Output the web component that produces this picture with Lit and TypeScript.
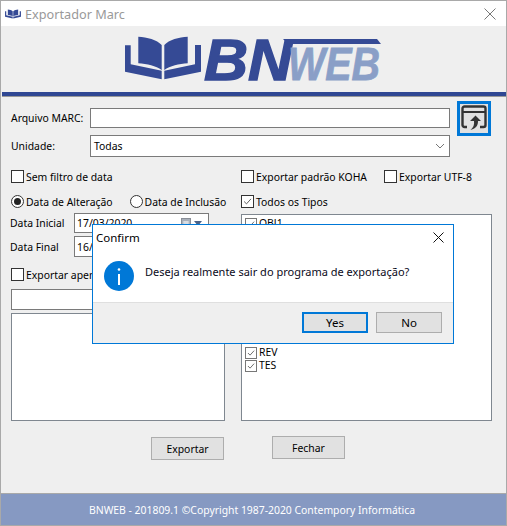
import { LitElement, html, css, svg } from "lit";
import { customElement } from "lit/decorators.js";

const check = html`<svg class="tick" viewBox="0 0 13 13"><path d="M2.5 6.5 5.3 9.3 10.6 3.4" /></svg>`;

function cb(label: string, checked = false) {
  return html`<label class="opt"><span class="box">${checked ? check : ""}</span><span>${label}</span></label>`;
}
function radio(label: string, on = false) {
  return html`<label class="opt"><span class="radio">${on ? html`<i></i>` : ""}</span><span>${label}</span></label>`;
}
function li(label: string) {
  return html`<div class="li"><span class="lbox">${check}</span><span>${label}</span></div>`;
}

const bookPaths = svg`
  <path d="M18.3 6.7C27 7.3 37 9.5 41.7 15V40C36 36 27 33.8 18.3 33.3Z"/>
  <path d="M44.3 15C49 9.5 59 7.3 67.7 6.7V33.3C59 33.8 50 36 44.3 40Z"/>
  <path d="M5 15.3H10.7V34.3L41.7 40.7V49.3L5 41.7Z"/>
  <path d="M81 15H75V34.3L44.3 40.7V49.3L81 41.7Z"/>`;

@customElement("app-root")
export class AppRoot extends LitElement {
  static styles = css`
    :host {
      display: block;
      position: relative;
      width: 507px;
      height: 526px;
      font: 10.4px "Noto Sans", sans-serif;
      color: #000;
    }
    * { box-sizing: border-box; }
    .win {
      width: 507px;
      height: 526px;
      border: 1px solid #a9a9a9;
      background: #efefef;
      display: flex;
      flex-direction: column;
    }
    .title {
      height: 25px;
      background: #fff;
      display: flex;
      align-items: center;
      padding-left: 3px;
      font-size: 12.7px;
      color: #999;
      gap: 3px;
    }
    .title .x { margin-left: auto; margin-right: 10px; display: block; }
    .x path { stroke: #777; stroke-width: 1; fill: none; }
    .logo { height: 66px; padding: 4px 0 0 119px; flex: none; }
    .logo svg { display: block; overflow: visible; }
    .book { fill: #354a95; }
    .bn { font: italic bold 57px "Liberation Sans", sans-serif; fill: #354a95; stroke: #354a95; stroke-width: 1.4; }
    .web { font: italic bold 46px "Liberation Sans", sans-serif; fill: #8a9fc7; stroke: #8a9fc7; stroke-width: 0.8; }
    .rule { height: 5px; flex: none; background: #2f4793; border-bottom: 1px solid #999; margin-left: 1px; }
    .form { flex: 1; padding: 4px 0 0 10px; display: flex; flex-direction: column; }
    .top {
      display: grid;
      grid-template-columns: 79px 360px 41px;
      grid-template-rows: 34px 22px;
      align-items: center;
    }
    .field {
      display: flex;
      align-items: center;
      background: #fff;
      border: 1px solid #7a7a7a;
      padding: 0 3px;
    }
    .in { height: 20px; }
    .sel { height: 22px; justify-content: space-between; padding-right: 4px; }
    .chev { display: block; }
    .chev path { fill: none; stroke: #777; }
    .browse {
      margin-left: 7px;
      width: 34px;
      height: 35px;
      border: 3px solid #0078d7;
      background: #e1e1e1;
      display: flex;
      align-items: center;
      justify-content: center;
      padding: 0;
    }
    .browse svg { display: block; }
    .cols { display: flex; gap: 16px; margin-top: 13px; }
    .left { width: 214px; display: flex; flex-direction: column; }
    .right { width: 251px; display: flex; flex-direction: column; }
    .line { display: flex; height: 13px; align-items: center; }
    .gap17 { gap: 17px; }
    .opt { display: flex; align-items: center; gap: 2px; height: 13px; white-space: nowrap; }
    .box { width: 13px; height: 13px; border: 1px solid #333; background: #fff; flex: none; display: block; }
    .tick { display: block; width: 100%; height: 100%; }
    .tick path { fill: none; stroke: #555; stroke-width: 1.1; }
    .radio {
      width: 13px; height: 13px; border: 1px solid #333; border-radius: 50%; background: #fff;
      flex: none; display: flex; align-items: center; justify-content: center;
    }
    .radio i { width: 7px; height: 7px; border-radius: 50%; background: #222; display: block; }
    .mt12 { margin-top: 12px; }
    .dates { display: grid; grid-template-columns: 63px 135px; margin-top: 5px; row-gap: 3px; align-items: center; }
    .date { height: 20px; justify-content: space-between; padding: 0 6px 0 2px; }
    .date + .lab + .date { height: 21px; }
    .cal { display: flex; align-items: center; gap: 3px; }
    .cal svg { display: block; }
    .lab { margin-left: -1px; }
    .mt11 { margin-top: 11px; }
    .search { height: 21px; margin-top: 8px; }
    .list { background: #fff; border: 1px solid #7f8790; }
    .list.l { height: 108px; margin-top: 3px; }
    .list.r { height: 207px; margin-top: 6px; padding: 2px 0 0 3px; }
    .li { height: 13px; display: flex; align-items: center; gap: 2px; line-height: 13px; }
    .lbox { width: 12px; height: 12px; border: 1px solid #777; background: #fff; flex: none; display: block; }
    .skip { height: 116px; }
    .acts { display: flex; align-items: flex-start; gap: 48px; padding-left: 140px; margin-top: 15px; }
    .btn {
      width: 73px; height: 23px; background: #e1e1e1; border: 1px solid #adadad;
      display: flex; align-items: center; justify-content: center;
    }
    .btn.down { margin-top: 1px; }
    .foot {
      height: 32px;
      flex: none;
      background: #8699c2;
      border-top: 1px solid #a9a9a9;
      color: #fff;
      display: flex;
      align-items: center;
      justify-content: center;
      padding-right: 3px;
    }
    .dlg {
      position: absolute;
      left: 92px;
      top: 224px;
      width: 362px;
      height: 120px;
      background: #fff;
      border: 1px solid #0078d7;
      display: flex;
      flex-direction: column;
      font-size: 11px;
    }
    .dhead { height: 24px; display: flex; align-items: center; justify-content: space-between; padding: 0 9px 0 3px; font-size: 11.5px; flex: none; }
    .dhead .x path { stroke: #111; }
    .dbody { flex: 1; display: flex; align-items: flex-start; padding: 12px 0 0 11px; gap: 11px; }
    .dbody svg { display: block; flex: none; }
    .dbody span { margin-top: 3px; color: #0a0a1a; }
    .dfoot {
      height: 41px; flex: none; background: #efefef; border-top: 1px solid #dfdfdf;
      display: flex; justify-content: flex-end; gap: 8px; padding: 9px 11px 0 0; font-size: 11.5px;
    }
    .dbtn {
      width: 66px; height: 21px; background: #e1e1e1; border: 1px solid #adadad;
      display: flex; align-items: center; justify-content: center;
    }
    .dbtn.def { border: 2px solid #0078d7; }
  `;

  render() {
    return html`
      <div class="win">
        <div class="title">
          <svg width="18" height="14" viewBox="0 0 86 56" class="book">${bookPaths}</svg>
          <span>Exportador Marc</span>
          <svg class="x" width="12" height="12" viewBox="0 0 12 12"><path d="M.5.5 11.5 11.5M11.5.5.5 11.5"/></svg>
        </div>
        <div class="logo">
          <svg width="270" height="60" viewBox="0 0 270 60">
            <g class="book">${bookPaths}</g>
            <text class="bn" x="84" y="50" textLength="88" lengthAdjust="spacingAndGlyphs">BN</text>
            <path class="book" d="M163 9H257L261 14H168Z"/>
            <text class="web" x="168" y="49.5" textLength="92" lengthAdjust="spacingAndGlyphs">WEB</text>
          </svg>
        </div>
        <div class="rule"></div>
        <div class="form">
          <div class="top">
            <span>Arquivo MARC:</span>
            <div class="field in"></div>
            <button class="browse">
              <svg width="26" height="26" viewBox="0 0 26 26">
                <path d="M6 22H3.5A2 2 0 0 1 1.5 20V3.5A2 2 0 0 1 3.5 1.5H22.5A2 2 0 0 1 24.5 3.5V20A2 2 0 0 1 22.5 22H19" fill="none" stroke="#333" stroke-width="2.4"/>
                <path d="M1.5 7H24.5" stroke="#333" stroke-width="2"/>
                <path d="M4 4H5.5M7 4H8.5M10 4H11.5" stroke="#ddd" stroke-width="1"/>
                <path d="M14.5 10.5 20 16H17C17 20 15.5 23.5 9.5 25C12.5 22.5 13.5 19.5 13 16H9Z" fill="#333"/>
              </svg>
            </button>
            <span>Unidade:</span>
            <div class="field sel">
              <span>Todas</span>
              <svg class="chev" width="10" height="6" viewBox="0 0 10 6"><path d="M1 1 5 5 9 1"/></svg>
            </div>
          </div>
          <div class="cols">
            <div class="left">
              <div class="line">${cb("Sem filtro de data")}</div>
              <div class="line mt12 gap17">${radio("Data de Alteração", true)}${radio("Data de Inclusão")}</div>
              <div class="dates">
                <span class="lab">Data Inicial</span>
                <div class="field date">
                  <span>17/03/2020</span>
                  <span class="cal">
                    <svg width="10" height="11" viewBox="0 0 10 11"><rect x=".5" y=".5" width="9" height="10" fill="#a9b0ba" stroke="#8a8f98"/><path d="M2 4H8M2 6H8M2 8H8M4 3V10M6 3V10" stroke="#e8ebef"/></svg>
                    <svg width="8" height="5" viewBox="0 0 8 5"><path d="M0 0H8L4 5Z" fill="#4a6186"/></svg>
                  </span>
                </div>
                <span class="lab">Data Final</span>
                <div class="field date"><span>16/03/2020</span></div>
              </div>
              <div class="line mt11">${cb("Exportar apenas")}</div>
              <div class="field search"></div>
              <div class="list l"></div>
            </div>
            <div class="right">
              <div class="line gap17">${cb("Exportar padrão KOHA")}${cb("Exportar UTF-8")}</div>
              <div class="line mt12">${cb("Todos os Tipos", true)}</div>
              <div class="list r">
                ${li("OBJ1")}
                <div class="skip"></div>
                ${li("REV")}
                ${li("TES")}
              </div>
            </div>
          </div>
          <div class="acts">
            <div class="btn down">Exportar</div>
            <div class="btn">Fechar</div>
          </div>
        </div>
        <div class="foot">BNWEB - 201809.1 ©Copyright 1987-2020 Contempory Informática</div>
      </div>
      <div class="dlg">
        <div class="dhead">
          <span>Confirm</span>
          <svg class="x" width="11" height="11" viewBox="0 0 11 11"><path d="M.5.5 10.5 10.5M10.5.5.5 10.5"/></svg>
        </div>
        <div class="dbody">
          <svg width="30" height="30" viewBox="0 0 30 30">
            <circle cx="15" cy="15" r="15" fill="#0078d7"/>
            <path d="M15 13V24" stroke="#fff" stroke-width="2"/>
            <circle cx="15" cy="8.5" r="1.3" fill="#fff"/>
          </svg>
          <span>Deseja realmente sair do programa de exportação?</span>
        </div>
        <div class="dfoot">
          <div class="dbtn def">Yes</div>
          <div class="dbtn">No</div>
        </div>
      </div>
    `;
  }
}
